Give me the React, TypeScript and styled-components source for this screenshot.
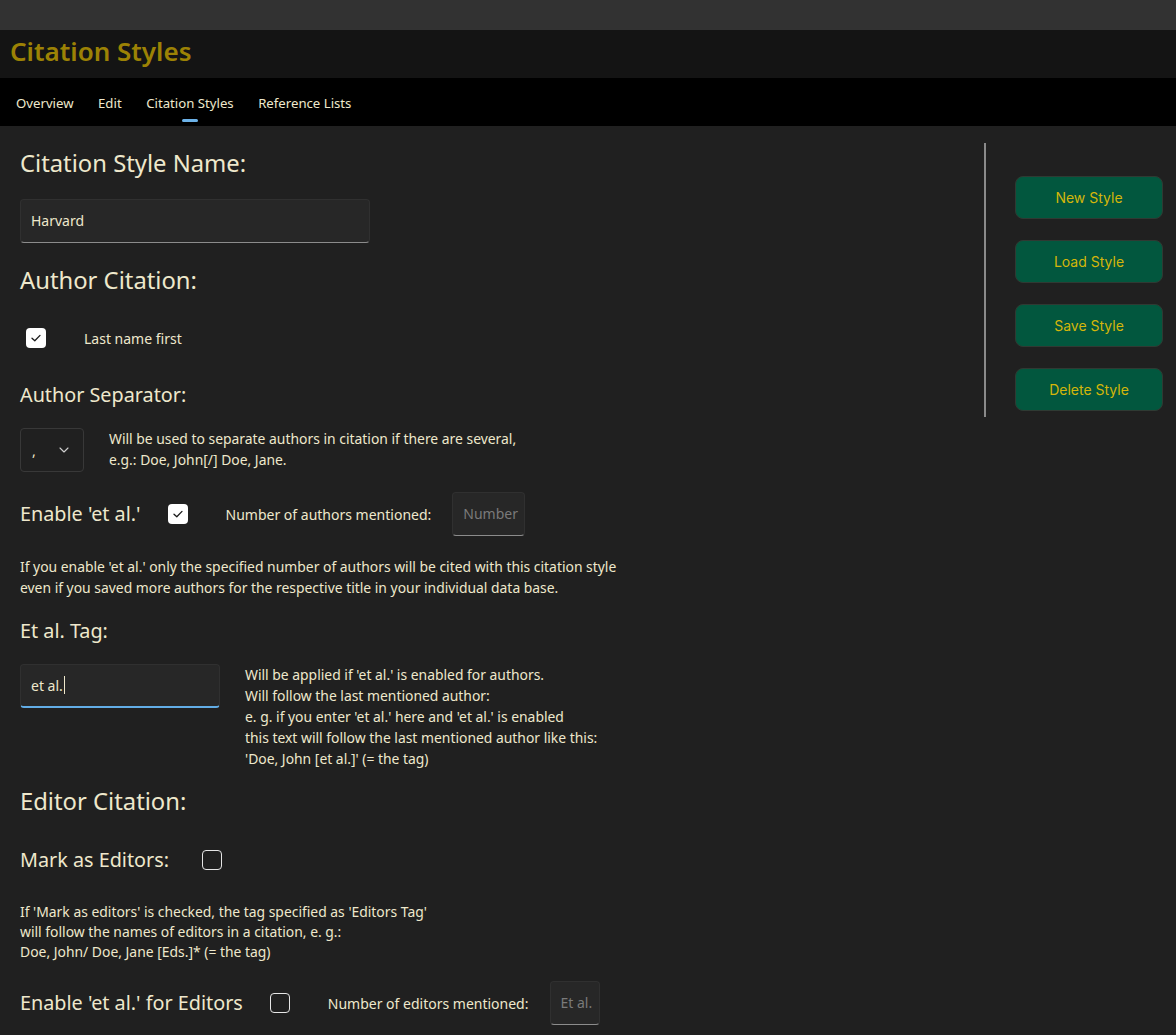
import React from "react";
import styled, { createGlobalStyle } from "styled-components";

const GlobalStyle = createGlobalStyle`
  html, body { margin: 0; padding: 0; background: #202020; }
  body { font-family: "Noto Sans", "Open Sans", sans-serif; color: #eee8cc; }
  * { box-sizing: border-box; }
`;

const Page = styled.div`
  min-height: 1035px;
  background: #202020;
  display: flex;
  flex-direction: column;
`;

const TopStrip = styled.div`
  height: 30px;
  background: #323232;
`;

const Header = styled.header`
  height: 48px;
  background: #141414;
  display: flex;
  align-items: center;
  padding: 0 0 6px 10px;
`;

const Title = styled.h1`
  margin: 0;
  font-size: 26px;
  font-weight: 600;
  color: #9c8205;
`;

const Nav = styled.nav`
  height: 48px;
  background: #000;
  display: flex;
  align-items: center;
  padding-left: 16px;
  gap: 24.5px;
`;

const Tab = styled.div<{ $active?: boolean }>`
  position: relative;
  font-size: 13.2px;
  color: #eee8cc;
  line-height: 48px;
  padding-top: 1px;
  &::after {
    content: "";
    display: ${(p) => (p.$active ? "block" : "none")};
    position: absolute;
    left: 50%;
    transform: translateX(-50%);
    bottom: 5px;
    width: 16px;
    height: 3px;
    border-radius: 2px;
    background: #6cb2e8;
  }
`;

const Body = styled.div`
  display: flex;
  flex: 1;
`;

const Main = styled.main`
  flex: 1;
  padding: 21px 0 0 20px;
  display: flex;
  flex-direction: column;
`;

const H2 = styled.h2<{ $mt?: number }>`
  margin: ${(p) => p.$mt ?? 0}px 0 0 0;
  font-size: 23.8px;
  font-weight: 400;
  line-height: 32px;
  color: #eee8cc;
`;

const H3 = styled.h3<{ $mt?: number }>`
  margin: ${(p) => p.$mt ?? 0}px 0 0 0;
  font-size: 19.8px;
  font-weight: 400;
  line-height: 28px;
  color: #eee8cc;
`;

const TextBox = styled.div<{ $w: number; $mt?: number; $ml?: number; $focus?: boolean }>`
  margin-top: ${(p) => p.$mt ?? 0}px;
  margin-left: ${(p) => p.$ml ?? 0}px;
  width: ${(p) => p.$w}px;
  height: 44px;
  flex-shrink: 0;
  background: #272727;
  border: 1px solid #303030;
  border-bottom: ${(p) => (p.$focus ? "2px solid #62ade6" : "1px solid #8c8c8c")};
  border-radius: 4px;
  display: flex;
  align-items: center;
  padding: 0 0 1px 10px;
  font-size: 14px;
  color: #eee8cc;
`;

const Placeholder = styled.span`
  color: #7a7a7a;
`;

const Caret = styled.span`
  display: inline-block;
  width: 1px;
  height: 18px;
  background: #eee8cc;
  margin-left: 1px;
  vertical-align: middle;
`;

const Row = styled.div<{ $mt?: number; $h?: number }>`
  margin-top: ${(p) => p.$mt ?? 0}px;
  height: ${(p) => p.$h ?? 44}px;
  display: flex;
  align-items: center;
`;

const TopRow = styled.div<{ $mt?: number }>`
  margin-top: ${(p) => p.$mt ?? 0}px;
  display: flex;
  align-items: flex-start;
`;

const Check = styled.div<{ $checked?: boolean; $ml?: number }>`
  width: 20px;
  height: 20px;
  flex-shrink: 0;
  margin-left: ${(p) => p.$ml ?? 0}px;
  border-radius: 4px;
  background: ${(p) => (p.$checked ? "#ffffff" : "transparent")};
  border: ${(p) => (p.$checked ? "none" : "1.5px solid #e6e6e6")};
  display: flex;
  align-items: center;
  justify-content: center;
`;

const Label = styled.span<{ $ml?: number }>`
  margin-left: ${(p) => p.$ml ?? 0}px;
  font-size: 14px;
  color: #eee8cc;
  white-space: nowrap;
`;

const Select = styled.div`
  width: 64px;
  height: 44px;
  flex-shrink: 0;
  border: 1px solid #383838;
  border-radius: 4px;
  display: flex;
  align-items: center;
  justify-content: space-between;
  padding: 0 14px 0 11px;
  font-size: 14px;
  color: #eee8cc;
`;

const Help = styled.p<{ $ml?: number; $mt?: number; $lh?: number }>`
  margin: ${(p) => p.$mt ?? 0}px 0 0 ${(p) => p.$ml ?? 0}px;
  font-size: 13.9px;
  line-height: ${(p) => p.$lh ?? 21}px;
  color: #eee8cc;
`;

const Sidebar = styled.aside`
  width: 208px;
  display: flex;
  align-items: flex-start;
  padding-left: 16px;
`;

const Divider = styled.div`
  width: 2px;
  height: 274px;
  margin-top: 17px;
  background: #8a8a8a;
`;

const ButtonColumn = styled.div`
  margin: 50px 0 0 29px;
  display: flex;
  flex-direction: column;
  gap: 21px;
`;

const ActionButton = styled.button`
  width: 148px;
  height: 43px;
  border-radius: 8px;
  border: 1px solid #2f3a33;
  background: #02573e;
  color: #d4b60a;
  font-family: "Inter", "Noto Sans", sans-serif;
  font-size: 14px;
  font-weight: 400;
  cursor: pointer;
`;

const CheckMark = () => (
  <svg width="12" height="12" viewBox="0 0 12 12" fill="none">
    <path d="M2 6.2 L4.8 8.8 L10 3.4" stroke="#1a1a1a" strokeWidth="1.3" strokeLinecap="round" strokeLinejoin="round" />
  </svg>
);

const Chevron = () => (
  <svg width="10" height="6" viewBox="0 0 10 6" fill="none">
    <path d="M1 1 L5 5 L9 1" stroke="#cfcfcf" strokeWidth="1.1" strokeLinecap="round" strokeLinejoin="round" />
  </svg>
);

export default function App() {
  return (
    <Page>
      <GlobalStyle />
      <TopStrip />
      <Header>
        <Title>Citation Styles</Title>
      </Header>
      <Nav>
        <Tab>Overview</Tab>
        <Tab>Edit</Tab>
        <Tab $active>Citation Styles</Tab>
        <Tab>Reference Lists</Tab>
      </Nav>
      <Body>
        <Main>
          <H2>Citation Style Name:</H2>
          <TextBox $w={350} $mt={20}>Harvard</TextBox>
          <H2 $mt={21}>Author Citation:</H2>
          <Row $mt={22} $h={40}>
            <Check $checked $ml={6}>
              <CheckMark />
            </Check>
            <Label $ml={38}>Last name first</Label>
          </Row>
          <H3 $mt={23}>Author Separator:</H3>
          <TopRow $mt={19}>
            <Select>
              <span>,</span>
              <Chevron />
            </Select>
            <Help $ml={25} $mt={0}>
              Will be used to separate authors in citation if there are several,
              <br />
              e.g.: Doe, John[/] Doe, Jane.
            </Help>
          </TopRow>
          <Row $mt={20}>
            <H3 as="span">Enable 'et al.'</H3>
            <Check $checked $ml={27}>
              <CheckMark />
            </Check>
            <Label $ml={38}>Number of authors mentioned:</Label>
            <TextBox $w={73} $ml={21}>
              <Placeholder>Number</Placeholder>
            </TextBox>
          </Row>
          <Help $mt={20}>
            If you enable 'et al.' only the specified number of authors will be cited with this citation style
            <br />
            even if you saved more authors for the respective title in your individual data base.
          </Help>
          <H3 $mt={19}>Et al. Tag:</H3>
          <TopRow $mt={19}>
            <TextBox $w={200} $focus>
              et al.<Caret />
            </TextBox>
            <Help $ml={25}>
              Will be applied if 'et al.' is enabled for authors.
              <br />
              Will follow the last mentioned author:
              <br />
              e. g. if you enter 'et al.' here and 'et al.' is enabled
              <br />
              this text will follow the last mentioned author like this:
              <br />
              'Doe, John [et al.]' (= the tag)
            </Help>
          </TopRow>
          <H2 $mt={16}>Editor Citation:</H2>
          <Row $mt={23} $h={40}>
            <H3 as="span">Mark as Editors:</H3>
            <Check $ml={33} />
          </Row>
          <Help $mt={22} $lh={20}>
            If 'Mark as editors' is checked, the tag specified as 'Editors Tag'
            <br />
            will follow the names of editors in a citation, e. g.:
            <br />
            Doe, John/ Doe, Jane [Eds.]* (= the tag)
          </Help>
          <Row $mt={19}>
            <H3 as="span">Enable 'et al.' for Editors</H3>
            <Check $ml={27} />
            <Label $ml={38}>Number of editors mentioned:</Label>
            <TextBox $w={50} $ml={21}>
              <Placeholder>Et al.</Placeholder>
            </TextBox>
          </Row>
        </Main>
        <Sidebar>
          <Divider />
          <ButtonColumn>
            <ActionButton>New Style</ActionButton>
            <ActionButton>Load Style</ActionButton>
            <ActionButton>Save Style</ActionButton>
            <ActionButton>Delete Style</ActionButton>
          </ButtonColumn>
        </Sidebar>
      </Body>
    </Page>
  );
}
